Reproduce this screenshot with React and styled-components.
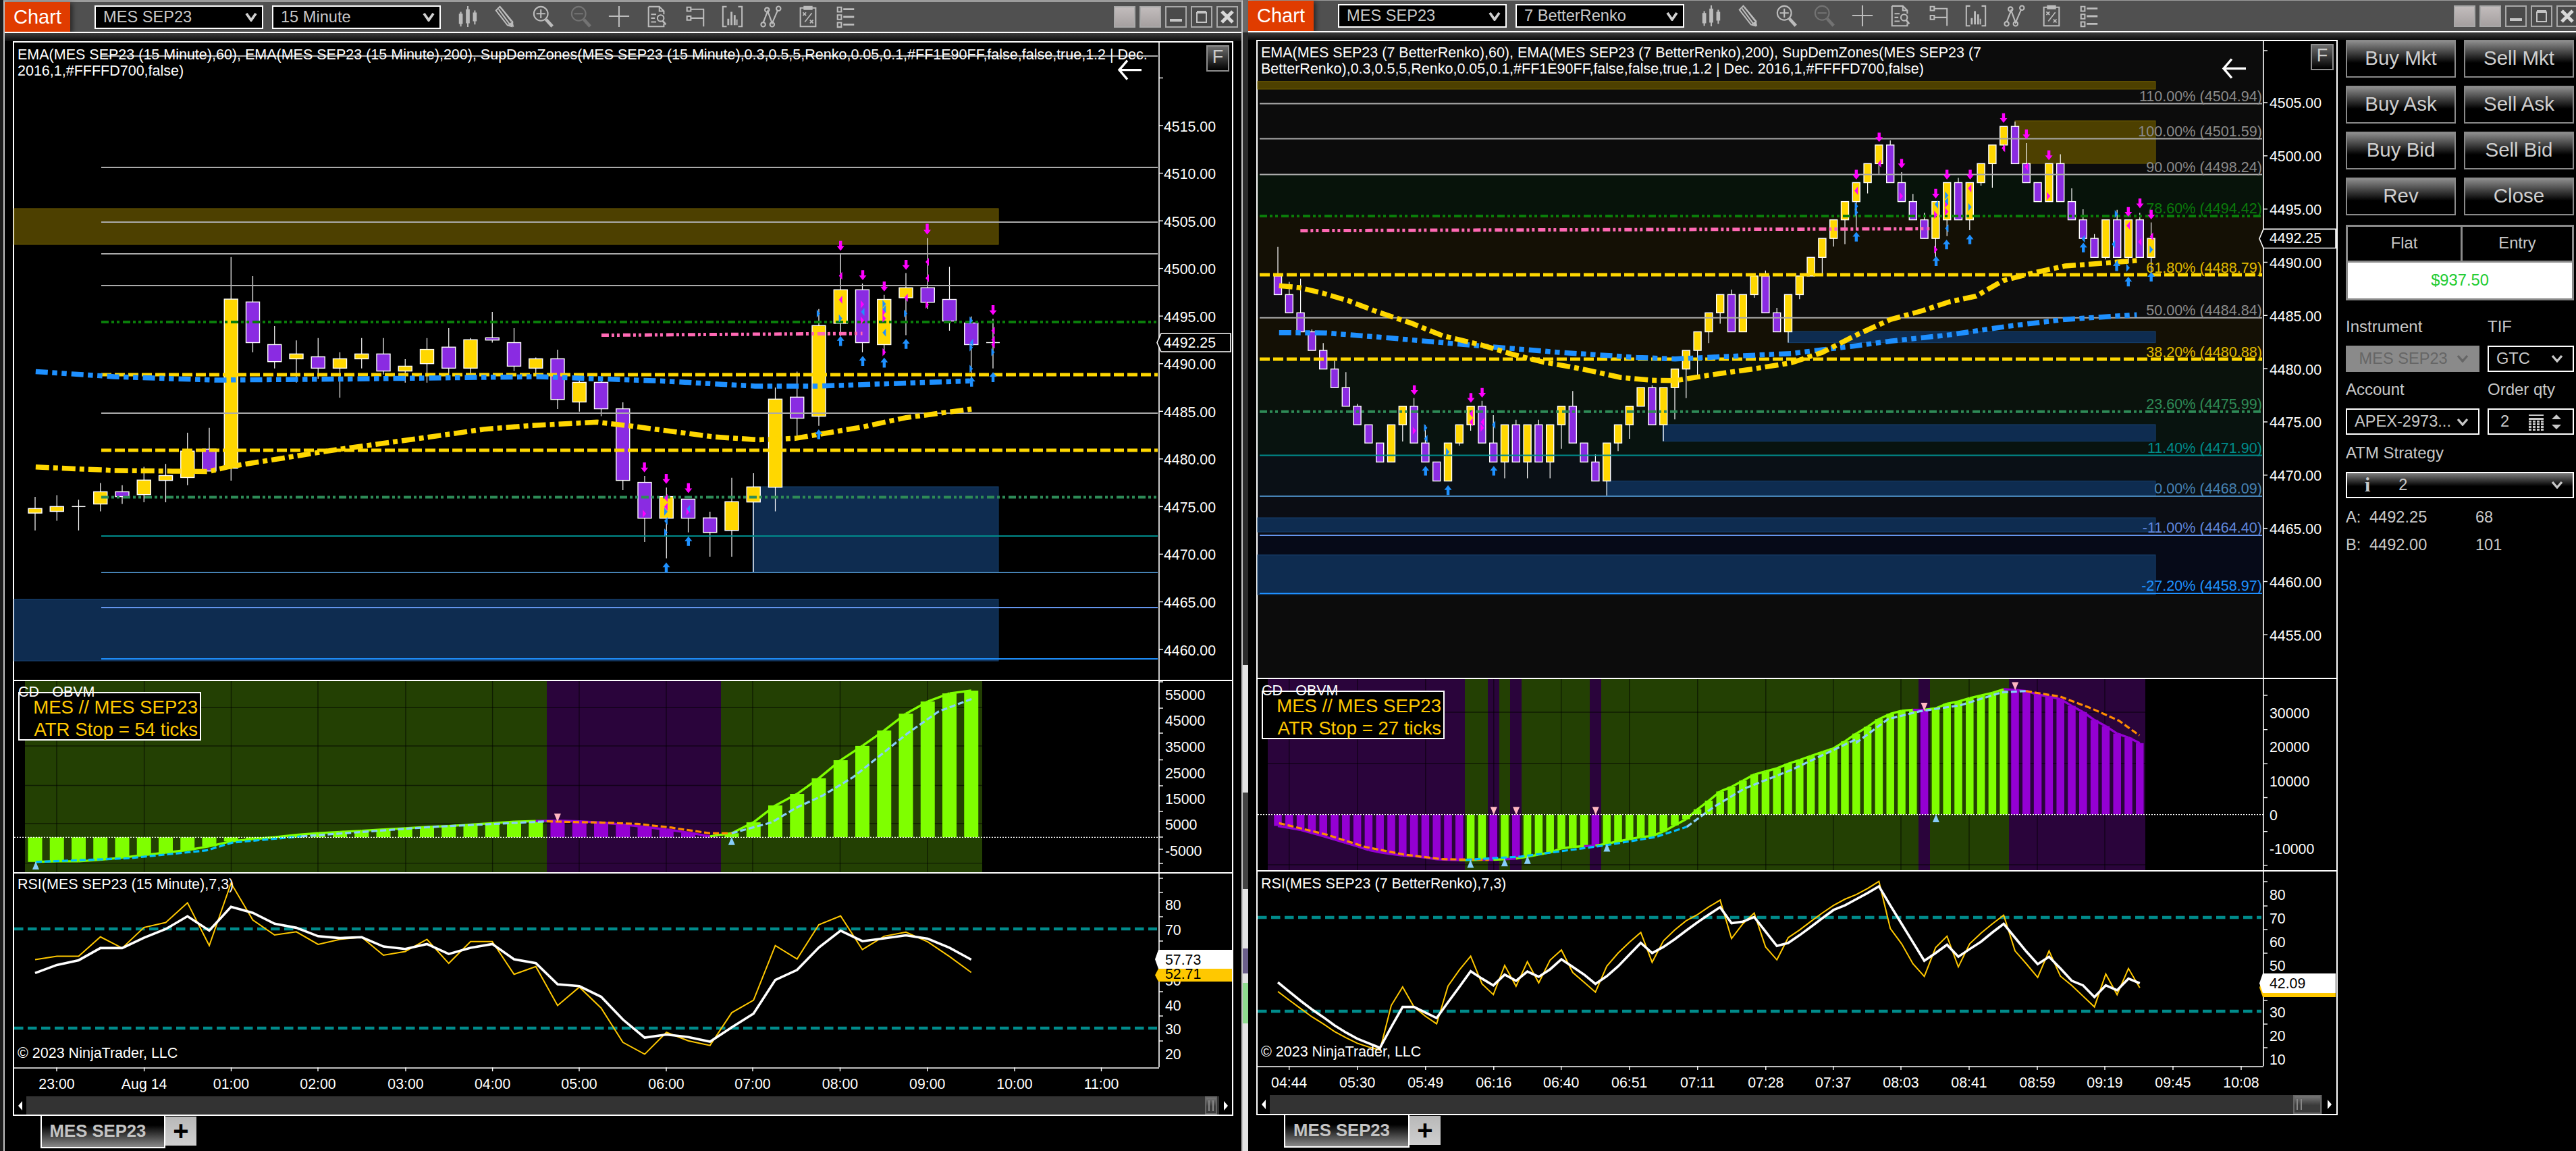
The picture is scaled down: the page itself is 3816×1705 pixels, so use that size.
import React from "react";
import styled, { createGlobalStyle } from "styled-components";

const GOLD = "#FFD700";
const VIOLET = "#8A2BE2";
const DODGER = "#1E90FF";
const MAGENTA = "#FF00FF";
const LIME = "#7FFF00";
const HIST_PURPLE = "#9400D3";

const EMA_BLUE_DASH = "18 6.5 7.5 6.5 7.5 7";
const EMA_GOLD_DASH = "20 6 7 6";
const FIB_DOTS = "11 4 4 4 4 5";

const pts = (list) => list.map((p) => p.join(",")).join(" ");
const range = (a, b, step = 1) => {
  const out = [];
  for (let v = a; v <= b; v += step) out.push(v);
  return out;
};

/* ---------- left chart data ---------- */
const lx = (i) => 52 + 32.25 * i;
const ly = (v) => 340 + v / 2.376;
const lx10 = (v) => 20 + v / 2.01;
const lx11 = (v) => 780 + v / 2.01;
const osc4x = (v) => v / 1.568;
const osc5x = (v) => 1000 + v / 1.742;
const osc4y = (v) => 980 + v / 2.163;

// wick top, body top, body bottom, wick bottom, kind
const LEFT_BARS = [
  [941, 982, 998, 1059, "g"], [935, 975, 992, 1025, "g"], [951, 975, 975, 1059, "d"],
  [892, 923, 966, 992, "g"], [900, 923, 940, 966, "p"], [835, 882, 933, 960, "g"],
  [825, 866, 883, 960, "g"], [715, 780, 873, 900, "g"], [698, 773, 850, 850, "p"],
  [97, 245, 840, 884, "g"], [164, 255, 398, 432, "p"], [340, 405, 465, 489, "p"],
  [390, 438, 455, 539, "g"], [382, 448, 488, 525, "p"], [432, 455, 488, 592, "g"],
  [382, 438, 455, 489, "g"], [382, 438, 498, 510, "p"], [456, 481, 498, 539, "g"],
  [382, 422, 472, 539, "g"], [347, 414, 488, 522, "p"], [382, 388, 488, 510, "g"],
  [290, 381, 389, 398, "p"], [347, 398, 481, 498, "p"], [450, 455, 488, 510, "g"],
  [423, 455, 598, 632, "p"], [523, 538, 607, 641, "g"], [532, 538, 631, 657, "p"],
  [608, 631, 883, 917, "p"], [867, 890, 1016, 1100, "p"], [908, 940, 1016, 1158, "g"],
  [949, 949, 1016, 1066, "p"], [993, 1015, 1066, 1152, "p"], [874, 958, 1059, 1152, "g"],
  [858, 906, 959, 1205, "g"], [556, 597, 907, 992, "g"], [500, 590, 664, 726, "p"],
  [280, 338, 657, 691, "g"], [88, 212, 330, 375, "g"], [190, 212, 398, 432, "p"],
  [230, 246, 405, 440, "g"], [153, 205, 240, 372, "g"], [30, 205, 256, 280, "p"],
  [131, 246, 322, 356, "p"], [306, 329, 405, 540, "p"], [314, 398, 398, 489, "d"],
];

const LEFT_OSC = [
  642, 640, 640, 635, 628, 620, 612, 604, 592, 576, 569, 563, 555, 550, 546, 542, 538, 534, 530, 527, 522, 518,
  513, 511, 510, 512, 516, 522, 530, 538, 548, 560, 550, 515, 461, 424, 374, 316, 270, 221, 167, 128, 102, 93,
];
const LEFT_RSI_W = [
  998, 972, 957, 918, 918, 885, 857, 816, 862, 786, 805, 840, 853, 880, 886, 883, 913, 921, 905, 937, 917, 905,
  954, 966, 1034, 1040, 1074, 1147, 1205, 1195, 1203, 1218, 1172, 1128, 1020, 988, 916, 862, 896, 887, 877, 888, 917, 955,
];
const LEFT_RSI_G = [
  955, 944, 944, 882, 918, 852, 836, 773, 910, 710, 828, 876, 866, 906, 890, 883, 941, 929, 890, 967, 897, 897,
  1002, 977, 1102, 1043, 1110, 1220, 1258, 1188, 1215, 1230, 1125, 1085, 910, 953, 843, 815, 923, 880, 867, 898, 945, 996,
];

const LEFT_MAIN = {
  zones: [
    { x1: 21, x2: 1479, y1: 309, y2: 362, kind: "gold" },
    { x1: 21, x2: 1479, y1: 887.5, y2: 979, kind: "blue" },
    { x1: 1115, x2: 1479, y1: 721, y2: 848, kind: "blue" },
  ],
  fibs: [
    { y: 83, c: "#AAAAAA" }, { y: 248, c: "#AAAAAA" }, { y: 329, c: "#AAAAAA" }, { y: 376, c: "#AAAAAA" },
    { y: 423, c: "#AAAAAA" }, { y: 477, c: "#0A7D0A", w: 4, dash: FIB_DOTS },
    { y: 555, c: GOLD, w: 5, dash: "15 5" }, { y: 612, c: "#AAAAAA" },
    { y: 667, c: GOLD, w: 5, dash: "15 5" }, { y: 736.5, c: "#2E8B57", w: 4, dash: FIB_DOTS },
    { y: 794, c: "#008B8B" }, { y: 848, c: "#4682B4" }, { y: 900, c: "#6495ED" }, { y: 976, c: DODGER },
  ],
  fibX: 150,
  emaBlue: [
    [lx10(66), ly(500)], [lx10(300), ly(518)], [lx10(600), ly(530)], [lx10(1000), ly(526)], [lx10(1560), ly(518)],
    [lx11(400), ly(533)], [lx11(680), ly(551)], [lx11(870), ly(551)], [lx11(1320), ly(533)],
  ],
  emaGold: [
    [lx10(66), ly(836)], [lx10(300), ly(848)], [lx10(580), ly(852)], [lx10(640), ly(835)], [lx10(960), ly(775)],
    [lx10(1240), ly(730)], [lx10(1400), ly(703)], [lx11(12), ly(690)], [lx11(210), ly(678)], [lx11(300), ly(690)],
    [lx11(560), ly(730)], [lx11(690), ly(740)], [lx11(800), ly(735)], [lx11(1000), ly(695)], [lx11(1130), ly(662)], [lx11(1325), ly(632)],
  ],
  pink: [[lx11(223), ly(372)], [lx11(1000), ly(366)]],
  downs: [[935, 40, 75], [1001, 143, 178], [1065, 183, 218], [1130, 107, 142], [1193, -20, 18], [1389, 266, 301], [351, 820, 855], [416, 860, 895], [482, 893, 928]],
  ups: [[935, 375, 410], [1001, 445, 480], [1065, 451, 486], [1130, 385, 420], [1325, 518, 553], [1389, 502, 537], [416, 1172, 1207], [482, 1080, 1114], [870, 703, 738]],
  marksM: [[940, 163, -1], [1198, 114, -1], [1198, 171, -1], [940, 247, -1], [995, 263, 1], [1060, 290, 1], [1060, 313, 1], [1135, 240, -1], [1188, 265, 1], [1060, 432, 1], [995, 320, 1], [1394, 356, -1], [1394, 388, -1], [1394, 405, -1], [346, 1000, 1], [420, 945, -1], [420, 976, -1], [476, 992, 1]],
  marksB: [[864, 296, 1], [930, 313, 1], [1006, 290, -1], [1060, 262, 1], [1070, 280, -1], [1070, 363, -1], [1124, 296, 1], [1319, 320, 1], [1330, 398, -1], [1319, 415, 1], [1319, 490, 1], [1384, 432, 1], [410, 993, 1], [420, 1026, -1], [410, 1066, 1], [487, 983, -1]],
};

/* ---------- right chart data ---------- */
const rx = (i) => 1893 + 16.8 * i;
const ry = (v) => 100 + v / 1.742;
const rx6 = (v) => 1850 + v / 1.742;
const rx7 = (v) => 2600 + v / 1.742;
const osc8y = (v) => 990 + v / 2.193;
const osc8x = (v) => 1850 + v / 1.742;
const osc9x = (v) => 2700 + v / 1.96;

const RIGHT_BARS = [
  [463, 538, 586, 586, "p"], [553, 586, 633, 633, "p"], [545, 633, 682, 682, "p"], [676, 682, 730, 730, "p"],
  [711, 730, 778, 778, "p"], [757, 778, 826, 826, "p"], [786, 826, 874, 874, "p"], [868, 874, 922, 922, "p"],
  [922, 922, 969, 969, "p"], [969, 969, 1018, 1018, "p"], [922, 922, 1018, 1018, "g"], [874, 874, 922, 965, "g"],
  [853, 874, 969, 969, "p"], [923, 969, 1018, 1018, "p"], [1018, 1018, 1067, 1067, "p"], [969, 969, 1067, 1067, "g"],
  [922, 922, 969, 976, "g"], [874, 874, 922, 937, "g"], [860, 874, 969, 969, "p"], [897, 969, 1018, 1018, "p"],
  [922, 922, 1018, 1060, "g"], [909, 922, 1018, 1018, "p"], [922, 922, 1018, 1060, "g"], [909, 922, 1018, 1018, "p"],
  [922, 922, 1018, 1060, "g"], [874, 874, 922, 984, "g"], [835, 874, 969, 969, "p"], [969, 969, 1018, 1018, "p"],
  [998, 1018, 1067, 1067, "p"], [969, 969, 1067, 1105, "g"], [922, 922, 969, 990, "g"], [874, 874, 922, 958, "g"],
  [826, 826, 874, 874, "g"], [820, 826, 922, 922, "p"], [826, 826, 922, 964, "g"], [778, 778, 826, 908, "g"],
  [730, 730, 778, 853, "g"], [682, 682, 730, 797, "g"], [633, 633, 682, 711, "g"], [586, 586, 633, 661, "g"],
  [573, 586, 682, 682, "p"], [586, 586, 682, 682, "g"], [538, 538, 586, 594, "g"], [524, 538, 633, 633, "p"],
  [620, 633, 682, 682, "p"], [586, 586, 682, 710, "g"], [538, 538, 586, 598, "g"], [490, 490, 538, 538, "g"],
  [441, 441, 490, 538, "g"], [393, 393, 441, 462, "g"], [346, 346, 393, 456, "g"], [297, 297, 346, 420, "g"],
  [248, 248, 297, 325, "g"], [200, 200, 248, 275, "g"], [188, 200, 297, 297, "p"], [270, 297, 346, 346, "p"],
  [326, 346, 393, 393, "p"], [375, 393, 441, 441, "p"], [346, 346, 441, 505, "g"], [297, 297, 393, 435, "g"],
  [285, 297, 393, 393, "p"], [297, 297, 393, 420, "g"], [248, 248, 297, 305, "g"], [200, 200, 248, 310, "g"],
  [152, 152, 200, 215, "g"], [140, 152, 248, 248, "p"], [195, 248, 297, 297, "p"], [297, 297, 346, 346, "p"],
  [248, 248, 346, 346, "g"], [224, 248, 346, 346, "p"], [312, 346, 393, 393, "p"], [366, 393, 441, 441, "p"],
  [430, 441, 490, 490, "p"], [393, 393, 490, 495, "g"], [367, 393, 490, 490, "p"], [393, 393, 490, 505, "g"],
  [375, 393, 490, 490, "p"], [400, 441, 490, 530, "g"],
];

const RIGHT_OSC = [
  512, 518, 525, 535, 545, 556, 567, 578, 590, 598, 603, 608, 610, 615, 620, 622, 623, 623, 622, 622, 620, 618,
  612, 605, 598, 585, 580, 578, 576, 570, 562, 555, 548, 545, 530, 510, 490, 458, 430, 400, 385, 365, 345, 335,
  325, 310, 298, 285, 272, 260, 237, 212, 190, 165, 148, 138, 135, 135, 130, 115, 108, 97, 88, 80, 68, 70, 74,
  85, 92, 100, 122, 142, 168, 188, 212, 225, 243,
];
const RIGHT_PURPLE = new Set([...range(0, 16), 19, 21, 28, 57, ...range(65, 76)]);

const RIGHT_RSI_W = [
  1020, 1050, 1080, 1108, 1133, 1160, 1183, 1203, 1218, 1233, 1165, 1100, 1100, 1118, 1136, 1085, 1035, 984, 1008,
  1030, 995, 1015, 985, 1002, 978, 945, 970, 995, 1025, 1000, 968, 930, 892, 925, 905, 880, 852, 825, 800, 776, 828,
  823, 808, 855, 902, 892, 867, 840, 812, 785, 770, 750, 730, 708, 770, 830, 890, 950, 925, 898, 937, 912, 888, 858,
  830, 875, 920, 961, 937, 975, 1015, 1030, 1068, 1030, 1046, 1008, 1023,
];
const RIGHT_RSI_G = [
  1050, 1078, 1105, 1132, 1155, 1180, 1200, 1218, 1230, 1240, 1095, 1035, 1100, 1130, 1155, 1032, 980, 935, 1025,
  1060, 965, 1033, 953, 1022, 948, 915, 988, 1020, 1052, 968, 925, 890, 858, 955, 885, 850, 820, 800, 775, 753, 878,
  830, 795, 905, 947, 875, 850, 822, 795, 770, 750, 735, 715, 692, 845, 895, 960, 1001, 907, 870, 970, 895, 860, 830,
  802, 918, 960, 1004, 918, 1000, 1030, 1065, 1100, 993, 1060, 975, 1038,
];

const RIGHT_MAIN = {
  bands: [
    [61, 258, "#0C0C0C"], [258, 320, "#07130A"], [320, 407, "#141005"], [407, 471, "#0D0D0D"], [471, 532, "#141005"],
    [532, 610, "#0A120C"], [610, 675, "#08130F"], [675, 735, "#0A1016"], [735, 793, "#0B0D14"], [793, 879, "#060A18"], [879, 1004, "#0C0C0C"],
  ],
  zones: [
    { x1: 1863, x2: 3193, y1: 120.7, y2: 132, kind: "gold" },
    { x1: 2985, x2: 3193, y1: 179, y2: 242, kind: "gold" },
    { x1: 2649, x2: 3193, y1: 491, y2: 507.6, kind: "blue" },
    { x1: 2463, x2: 3193, y1: 629, y2: 653.4, kind: "blue" },
    { x1: 2380, x2: 3193, y1: 712.5, y2: 735, kind: "blue" },
    { x1: 1863, x2: 3193, y1: 767, y2: 788, kind: "blue" },
    { x1: 1863, x2: 3193, y1: 822, y2: 880.7, kind: "blue" },
  ],
  fibs: [
    { y: 153.4, c: "#AAAAAA" }, { y: 205.6, c: "#AAAAAA" }, { y: 258.4, c: "#AAAAAA" },
    { y: 319.9, c: "#0A7D0A", w: 4, dash: FIB_DOTS }, { y: 407, c: GOLD, w: 5, dash: "15 5" },
    { y: 470.8, c: "#AAAAAA" }, { y: 532, c: GOLD, w: 5, dash: "15 5" },
    { y: 609.8, c: "#2E8B57", w: 4, dash: FIB_DOTS }, { y: 674.6, c: "#008B8B" },
    { y: 735, c: "#4682B4" }, { y: 793, c: "#6495ED" }, { y: 879, c: DODGER },
  ],
  fibX: 1866,
  fibLabels: [
    ["110.00% (4504.94)", 74, "#8A8A8A"], ["100.00% (4501.59)", 164, "#8A8A8A"], ["90.00% (4498.24)", 257, "#8A8A8A"],
    ["78.60% (4494.42)", 363, "#0B7A0B"], ["61.80% (4488.79)", 516, "#E0BB00"], ["50.00% (4484.84)", 627, "#8A8A8A"],
    ["38.20% (4480.88)", 734, "#E0BB00"], ["23.60% (4475.99)", 868, "#2E8B57"], ["11.40% (4471.90)", 982, "#008B8B"],
    ["0.00% (4468.09)", 1086, "#4682B4"], ["-11.00% (4464.40)", 1187, "#5F86DD"], ["-27.20% (4458.97)", 1337, DODGER],
  ],
  emaGold: [
    [78, 563], [130, 568], [190, 582], [260, 603], [330, 630], [420, 660], [500, 692], [600, 716], [680, 740], [760, 760],
    [860, 778], [960, 800], [1040, 807], [1100, 808], [1200, 792], [1300, 778], [1400, 762], [1480, 735],
  ].map(([x, y]) => [rx6(x), ry(y)]).concat(
    [[262, 690], [350, 650], [430, 628], [500, 605], [570, 590], [640, 550], [710, 532], [800, 512], [900, 505], [985, 498]].map(([x, y]) => [rx7(x), ry(y)])
  ),
  emaBlue: [
    [78, 684], [200, 685], [340, 696], [500, 710], [640, 722], [800, 735], [1000, 748], [1100, 752], [1250, 745], [1400, 738],
  ].map(([x, y]) => [rx6(x), ry(y)]).concat(
    [[260, 718], [350, 706], [500, 690], [650, 668], [800, 650], [985, 638]].map(([x, y]) => [rx7(x), ry(y)])
  ),
  pink: [[rx6(133), ry(421)], [rx7(450), ry(416)]],
  downs: [
    ...[[261, 264, 289], [320, 168, 192], [378, 236, 260], [466, 313, 338], [495, 264, 289], [555, 264, 289], [641, 118, 143], [700, 160, 185], [758, 214, 239], [963, 360, 385], [993, 338, 363], [1022, 367, 392]].map(([x, a, b]) => [rx7(x), a, b]),
    ...[[427, 820, 845], [573, 840, 865], [602, 827, 852]].map(([x, a, b]) => [rx6(x), a, b]),
  ],
  ups: [
    ...[[261, 424, 449], [467, 487, 512], [494, 444, 469], [554, 431, 456], [847, 452, 477], [963, 540, 565], [1022, 528, 552], [933, 500, 525]].map(([x, a, b]) => [rx7(x), a, b]),
    ...[[456, 1028, 1053], [632, 1028, 1053], [514, 1078, 1103]].map(([x, a, b]) => [rx6(x), a, b]),
  ],
  marksM: [
    ...[[265, 318, -1], [325, 248, -1], [373, 332, 1], [462, 380, 1], [490, 352, 1], [490, 372, 1], [462, 470, 1], [558, 312, -1], [645, 208, -1], [704, 256, -1], [753, 332, 1], [967, 408, -1], [997, 450, -1], [1027, 436, -1]].map(([x, y, d]) => [rx7(x), y, d]),
    ...[[423, 937, 1], [578, 893, -1], [578, 915, -1], [607, 915, -1], [598, 930, 1]].map(([x, y, d]) => [rx6(x), y, d]),
  ],
  marksB: [
    ...[[257, 358, 1], [257, 374, 1], [472, 353, -1], [490, 330, 1], [498, 345, -1], [499, 415, -1], [550, 360, 1], [851, 442, -1], [928, 378, 1], [929, 456, -1], [958, 517, 1], [1018, 470, 1], [936, 507, -1]].map(([x, y, d]) => [rx7(x), y, d]),
    ...[[452, 930, 1], [461, 958, -1], [509, 992, 1], [636, 922, -1]].map(([x, y, d]) => [rx6(x), y, d]),
  ],
};

/* ---------- per-window config ---------- */
const LEFT_CFG = {
  x0: 21, axisX: 1717, width: 1804,
  main: { y: 63, h: 944 }, osc: { y: 1009, h: 283 }, rsi: { y: 1294, h: 287 }, time: { y: 1581, h: 43 },
  scrollH: 27, thumb: 18, thumbGap: 3, rightBtn: 19,
  priceX: 1724, prices: range(0, 11).map((k) => [4515 - 5 * k, 187.5 + 70.55 * k]),
  priceTicks: range(-1, 11).map((k) => 186 + 70.55 * k),
  last: { y1: 494, y2: 521, x1: 1714, x2: 1823, textX: 1724 },
  arrow: { x1: 1656, x2: 1691, y: 103.6 },
  oscTicksX: 1726,
  oscLabels: [["55000", 1030.4], ["45000", 1068], ["35000", 1106.7], ["25000", 1145.5], ["15000", 1184], ["5000", 1221.8], ["-5000", 1260.6]],
  oscTicks: [1010, 1049, 1086, 1125.6, 1164, 1202, 1240, 1258, 1279],
  oscBg: [[37, 810, "g"], [810, 1068, "p"], [1068, 1455, "g"]],
  oscGridY: [1048, 1105, 1163.5, 1220, 1278.6],
  oscGridX: [84, 213.6, 342.5, 471, 601, 729.6, 858, 987, 1115, 1244.5, 1373.7],
  zeroY: osc4y(563),
  rsiDash: [1376, 1523],
  rsiLabels: [[80, 1340.6], [70, 1377.6], [50, 1452.6], [40, 1489.6], [30, 1524.6], [20, 1561.6]],
  rsiTicks: [1301, 1322, 1358, 1394, 1431, 1469, 1505, 1542],
  times: [["23:00", 84], ["Aug 14", 213.6], ["01:00", 342.5], ["02:00", 471], ["03:00", 601], ["04:00", 729.6], ["05:00", 858], ["06:00", 987], ["07:00", 1115], ["08:00", 1244.5], ["09:00", 1373.7], ["10:00", 1503], ["11:00", 1631.5]],
  interval: "15 Minute",
  atr: "54",
};

const RIGHT_CFG = {
  x0: 1863, axisX: 3353, width: 1598,
  main: { y: 61, h: 943 }, osc: { y: 1006, h: 283 }, rsi: { y: 1291, h: 288 }, time: { y: 1579, h: 43 },
  scrollH: 28, thumb: 42, thumbGap: 1, rightBtn: 21,
  priceX: 3362, prices: range(0, 10).map((k) => [4505 - 5 * k, 153.4 + 78.83 * k]),
  priceTicks: [75, ...range(0, 10).map((k) => 152 + 78.83 * k)],
  last: { y1: 339.4, y2: 367.5, x1: 3347, x2: 3460, textX: 3362 },
  arrow: { x1: 3292, x2: 3327, y: 101.5 },
  oscTicksX: 3362,
  oscLabels: [["30000", 1056.6], ["20000", 1106.7], ["10000", 1157.8], ["0", 1207.5], ["-10000", 1257.7]],
  oscTicks: [1030, 1080.7, 1131.4, 1181.5, 1231.7, 1281.8],
  oscBg: [[1878, 2170, "p"], [2170, 2204, "g"], [2204, 2221, "p"], [2221, 2237, "g"], [2237, 2254, "p"], [2254, 2355, "g"], [2355, 2372, "p"], [2372, 2842, "g"], [2842, 2859, "p"], [2859, 2976, "g"], [2976, 3178, "p"]],
  oscGridY: [1055, 1131, 1206.6, 1281],
  oscGridX: [1909.7, 2010.7, 2111.8, 2212.8, 2312.7, 2413.7, 2514.8, 2615.8, 2715.7, 2816, 2917, 3018, 3118],
  zeroY: osc8y(475),
  rsiDash: [1359, 1498],
  rsiLabels: [[80, 1326], [70, 1360.7], [60, 1395.8], [50, 1431], [30, 1499.8], [20, 1535], [10, 1570]],
  rsiTicks: [1306, 1342, 1377, 1412, 1447, 1482, 1517, 1552],
  times: [["04:44", 1909.7], ["05:30", 2010.7], ["05:49", 2111.8], ["06:16", 2212.8], ["06:40", 2312.7], ["06:51", 2413.7], ["07:11", 2514.8], ["07:28", 2615.8], ["07:37", 2715.7], ["08:03", 2816], ["08:41", 2917], ["08:59", 3018], ["09:19", 3118], ["09:45", 3219], ["10:08", 3320]],
  interval: "7 BetterRenko",
  atr: "27",
};

/* ---------- styles ---------- */
const GlobalStyle = createGlobalStyle`
  html, body { margin: 0; background: #000; }
  body { font-family: "Liberation Sans", Arial, sans-serif; color: #fff; }
  * { box-sizing: border-box; }
`;

const Page = styled.div`
  display: flex;
  width: 3816px;
  height: 1705px;
  padding-left: 5px;
  background: #1c1c1c;
  overflow: hidden;
`;

const Window = styled.div`
  display: flex;
  flex-direction: column;
  background: #000;
  width: ${(p) => p.$width}px;
  border-top: ${(p) => p.$topEdge}px solid #9c9c9c;
  border-left: ${(p) => (p.$edged ? "2px solid #c4c4c4" : "none")};
  border-right: ${(p) => (p.$edged ? "2px solid #c4c4c4" : "none")};
`;

const Gutter = styled.div`
  width: 8px;
  height: 100%;
  background: linear-gradient(
    180deg,
    #6a6a6a 0 48px,
    #2b2b2b 48px 985px,
    #e4e4e4 985px 1174px,
    #444 1174px 1317px,
    #e4e4e4 1317px 1405px,
    #6b5f8a 1405px 1442px,
    #e4e4e4 1442px 1456px,
    #8fdc8f 1456px 1516px,
    #e4e4e4 1516px
  );
`;

const TitleBar = styled.div`
  display: flex;
  align-items: center;
  flex: none;
  height: ${(p) => p.$h}px;
  background: #505050;
`;

const ChartTag = styled.div`
  width: 97px;
  height: 100%;
  background: #e03c00;
  color: #fff;
  font-size: 29px;
  line-height: 44px;
  text-align: center;
  box-shadow: 4px 2px 6px rgba(0, 0, 0, 0.45);
  margin-right: 36px;
`;

const Combo = styled.div`
  display: flex;
  align-items: center;
  justify-content: space-between;
  width: 250px;
  height: 35px;
  margin-right: ${(p) => p.$mr || 0}px;
  padding: 0 7px 0 11px;
  background: #000;
  border: 2px solid #fff;
  color: #c8c8c8;
  font-size: 23.6px;
`;

const ToolRow = styled.div`
  display: flex;
  gap: 16px;
  margin-left: 20px;
`;

const ToolSvg = styled.svg`
  display: block;
  width: 40px;
  height: 34px;
  fill: none;
  stroke: #bcbcbc;
  stroke-width: 2.2;
  opacity: ${(p) => (p.$dim ? 0.32 : 1)};
`;

const WindowButtons = styled.div`
  display: flex;
  gap: 6px;
  margin-left: auto;
  margin-right: ${(p) => p.$mr}px;
`;

const WinButton = styled.div`
  display: flex;
  align-items: center;
  justify-content: center;
  width: 32px;
  height: 32px;
  border: 2px solid #a8a8a8;
  background: ${(p) => (p.$solid ? "linear-gradient(180deg, #c2bcbc, #a5a0a0)" : "#4a4a4a")};
`;

const SubBar = styled.div`
  flex: none;
  height: ${(p) => p.$h}px;
  border-top: 2px solid #fff;
  background: linear-gradient(180deg, #3d3d3d, #0c0c0c);
`;

const Body = styled.div`
  display: flex;
  align-items: flex-start;
  padding-left: 12px;
`;

const Frame = styled.div`
  display: flex;
  flex-direction: column;
  flex: none;
  width: ${(p) => p.$width + 4}px;
  border: 2px solid #fff;
`;

const Pane = styled.div`
  position: relative;
  height: ${(p) => p.$h}px;
  border-top: ${(p) => (p.$ruled ? "2px solid #fff" : "none")};
  box-sizing: content-box;
`;

const PaneSvg = styled.svg`
  display: block;
  overflow: visible;
`;

const AxisText = styled.text`
  font-family: "Liberation Sans", Arial, sans-serif;
  font-size: ${(p) => p.$size || 21.3}px;
  fill: ${(p) => p.$fill || "#fff"};
  dominant-baseline: central;
`;

const ChartTitle = styled.div`
  position: absolute;
  left: ${(p) => p.$left}px;
  top: ${(p) => p.$top}px;
  white-space: nowrap;
  font-size: 21.5px;
  line-height: 23.5px;
  color: #fff;
`;

const FloatButton = styled.div`
  position: absolute;
  right: 4px;
  top: ${(p) => p.$top}px;
  width: 34px;
  height: 39px;
  border: 2px solid #8e8e8e;
  background: linear-gradient(180deg, #6c6c6c, #000);
  color: #ccc;
  font-size: 27px;
  line-height: 31px;
  text-align: center;
`;

const InfoBox = styled.div`
  position: absolute;
  left: 6px;
  top: ${(p) => p.$top}px;
  width: 271px;
  height: 72px;
  padding: 4px 3px 0 0;
  border: 2px solid #fff;
  background: #000;
  color: #ffc800;
  font-size: 27.6px;
  line-height: 33px;
  text-align: right;
  white-space: nowrap;
`;

const ScrollBar = styled.div`
  display: flex;
  align-items: center;
  justify-content: flex-end;
  height: ${(p) => p.$h}px;
  background: #333;
`;

const ScrollArrow = styled.div`
  display: flex;
  align-items: center;
  justify-content: center;
  flex: none;
  width: ${(p) => p.$w}px;
  height: 100%;
  background: #000;
  margin-right: ${(p) => (p.$start ? "auto" : 0)};
  &::after {
    content: "";
    border-top: 7px solid transparent;
    border-bottom: 7px solid transparent;
    border-left: ${(p) => (p.$start ? 0 : "6px solid #fff")};
    border-right: ${(p) => (p.$start ? "6px solid #fff" : 0)};
  }
`;

const ScrollThumb = styled.div`
  flex: none;
  width: ${(p) => p.$w}px;
  height: 100%;
  margin-right: ${(p) => p.$gap}px;
  border: 2px solid #666;
  background: linear-gradient(180deg, #777, #3a3a3a 55%);
  display: flex;
  align-items: center;
  justify-content: flex-start;
  gap: 4px;
  padding-left: 3px;
  &::before, &::after {
    content: "";
    width: 2px;
    height: 16px;
    background: #888;
  }
`;

const TabRow = styled.div`
  display: flex;
  align-items: flex-start;
  margin-left: ${(p) => p.$ml}px;
`;

const Tab = styled.div`
  width: ${(p) => p.$w}px;
  height: 48px;
  padding-right: 15px;
  border: 2px solid #fff;
  border-top: none;
  background: linear-gradient(180deg, #000 30%, #8a8a8a);
  color: #c4c4c4;
  font-size: 25.7px;
  font-weight: 700;
  line-height: 44px;
  text-align: center;
`;

const AddTab = styled.div`
  width: 46px;
  height: 43px;
  margin-top: 1px;
  background: linear-gradient(180deg, #b8b8b8, #cfcfcf);
  color: #000;
  font-size: 40px;
  font-weight: 700;
  line-height: 42px;
  text-align: center;
`;

const OrderPanel = styled.div`
  display: flex;
  flex-direction: column;
  flex: none;
  width: 338px;
  margin-left: 12px;
  color: #c8c8c8;
`;

const ActionGrid = styled.div`
  display: grid;
  grid-template-columns: 163px 163px;
  grid-auto-rows: 55.5px;
  gap: 12.5px 12px;
`;

const ActionButton = styled.div`
  border: 2px solid #8a8a8a;
  background: linear-gradient(180deg, #8c8c8c, #000 62%);
  color: #cfcfcf;
  font-size: 29.5px;
  line-height: 50px;
  text-align: center;
`;

const PositionBox = styled.div`
  display: grid;
  grid-template-columns: 167px 1fr;
  grid-template-rows: 53px 53px;
  margin-top: 14px;
  border: 3px solid #8a8a8a;
  font-size: 23.7px;
`;

const PositionCell = styled.div`
  display: flex;
  align-items: center;
  justify-content: center;
  border-left: ${(p) => (p.$split ? "3px solid #8a8a8a" : "none")};
  border-bottom: 3px solid #8a8a8a;
`;

const PnlCell = styled.div`
  grid-column: 1 / 3;
  display: flex;
  align-items: center;
  justify-content: center;
  background: #fff;
  color: #22cc33;
`;

const FieldGrid = styled.div`
  display: grid;
  grid-template-columns: 198px 128px;
  gap: 12.5px 12px;
  margin-top: 25px;
`;

const Field = styled.div`
  display: flex;
  flex-direction: column;
  gap: 14px;
  grid-column: ${(p) => (p.$wide ? "1 / 3" : "auto")};
`;

const FieldLabel = styled.div`
  font-size: 24px;
  line-height: 28px;
  white-space: nowrap;
`;

const FieldBox = styled.div`
  display: flex;
  align-items: center;
  height: 39px;
  padding: 0 8px 0 11px;
  border: 2px solid ${(p) => (p.$disabled ? "#8a8a8a" : "#fff")};
  background: ${(p) => (p.$disabled ? "#8a8a8a" : p.$shaded ? "linear-gradient(180deg, #7c7c7c, #000 55%)" : "#000")};
  color: ${(p) => (p.$disabled ? "#666" : "#c8c8c8")};
  font-size: 23.6px;
  white-space: nowrap;
`;

const BoxChevron = styled.svg`
  display: block;
  flex: none;
  margin-left: auto;
  margin-right: 6px;
  width: 18px;
  height: 12px;
  fill: none;
  stroke: currentColor;
  stroke-width: 3.4;
`;

const InfoGlyph = styled.span`
  font-family: "Liberation Serif", serif;
  font-size: 30px;
  font-weight: 700;
  margin: 0 42px 0 15px;
`;

const QtyValue = styled.span`
  margin-left: 6px;
`;

const QtyIcons = styled.svg`
  display: block;
  flex: none;
  margin-left: auto;
  width: 60px;
  height: 28px;
  fill: #c8c8c8;
`;

const QuoteGrid = styled.div`
  display: grid;
  grid-template-columns: 35px 157px 1fr;
  grid-auto-rows: 28px;
  row-gap: 13px;
  margin-top: 14.5px;
  font-size: 23.6px;
  line-height: 28px;
`;

const ComboChevron = styled.svg`
  display: block;
  width: 18px;
  height: 14px;
  fill: none;
  stroke: #d0d0d0;
  stroke-width: 3.8;
`;

/* ---------- toolbar drawings ---------- */
const TOOLS = {
  bars: (
    <>
      <path d="M9 10v23M20 1v33M31 8v22" />
      <path fill="#bcbcbc" d="M6 13h6v16H6zM17 6h6v22h-6zM28 11h6v14h-6z" stroke="none" />
    </>
  ),
  pencil: (
    <>
      <path d="M5 8l6-6 20 24-1 7-7-2z" />
      <path d="M9 6l17 23M13 4l16 21" />
      <path fill="#bcbcbc" stroke="none" d="M24 30l7-5 2 9z" />
    </>
  ),
  zoomIn: (
    <>
      <circle cx="16" cy="13" r="11" />
      <path d="M16 6v14M9 13h14" />
      <path d="M24 22l10 11" strokeWidth="5" />
    </>
  ),
  zoomOut: (
    <>
      <circle cx="16" cy="13" r="11" />
      <path d="M9 13h14" />
      <path d="M24 22l10 11" strokeWidth="5" />
    </>
  ),
  cross: <path d="M20 1v33M4 17h32" />,
  report: (
    <>
      <path d="M7 2h17l7 7v5M7 2v31h24v-4M24 2v7h7" />
      <path d="M11 14h8M11 20h6M11 26h8" />
      <circle cx="26" cy="20" r="5" />
      <path d="M29 24l5 6" strokeWidth="3" />
    </>
  ),
  template: (
    <>
      <path d="M8 3h6v6H8zM8 17h6v6H8zM14 6h21M14 20h21M34 6v27" />
    </>
  ),
  indicator: (
    <>
      <path d="M11 2H5v31h6M29 2h6v31h-6" />
      <path fill="#bcbcbc" stroke="none" d="M12 21h3v10h-3zM17 10h3v21h-3zM22 15h3v16h-3zM26 22h2v9h-2z" />
    </>
  ),
  nodes: (
    <>
      <path d="M9 27L16 9l7 19L32 7" />
      <circle cx="9" cy="30" r="3.4" />
      <circle cx="15" cy="7" r="3.4" />
      <circle cx="23" cy="30" r="3.4" />
      <circle cx="33" cy="5" r="3.4" />
    </>
  ),
  strategy: (
    <>
      <path d="M8 4h24v29H8zM14 2h12v4H14z" />
      <path d="M12 11l5 5M17 11l-5 5M23 23l5 5M28 23l-5 5M15 26L26 12" strokeWidth="1.8" />
    </>
  ),
  list: (
    <>
      <path d="M7 3h6v7H7zM7 15h6v7H7zM7 27h6v7H7z" />
      <path d="M16 6h17M16 18h17M16 30h17" strokeWidth="3" />
    </>
  ),
};

const Chevron = () => (
  <BoxChevron viewBox="0 0 18 12">
    <path d="M2 2l7 8 7-8" />
  </BoxChevron>
);

function InstrumentCombo({ children, mr }) {
  return (
    <Combo $mr={mr}>
      {children}
      <ComboChevron viewBox="0 0 18 14">
        <path d="M2 2l7 10 7-10" />
      </ComboChevron>
    </Combo>
  );
}

function TopBar({ cfg, h, buttonsMr }) {
  return (
    <TitleBar $h={h}>
      <ChartTag>Chart</ChartTag>
      <InstrumentCombo mr={13}>MES SEP23</InstrumentCombo>
      <InstrumentCombo>{cfg.interval}</InstrumentCombo>
      <ToolRow>
        {Object.keys(TOOLS).map((name) => (
          <ToolSvg key={name} viewBox="0 0 40 36" $dim={name === "zoomOut"}>
            {TOOLS[name]}
          </ToolSvg>
        ))}
      </ToolRow>
      <WindowButtons $mr={buttonsMr}>
        <WinButton $solid />
        <WinButton $solid />
        <WinButton>
          <svg width="20" height="20" viewBox="0 0 20 20">
            <rect x="1" y="13" width="18" height="4" fill="#c4c4c4" />
          </svg>
        </WinButton>
        <WinButton>
          <svg width="20" height="22" viewBox="0 0 20 22" fill="none" stroke="#c4c4c4">
            <path d="M3 5h14v14H3z" strokeWidth="2" />
            <path d="M3 4h14" strokeWidth="4" />
          </svg>
        </WinButton>
        <WinButton>
          <svg width="22" height="22" viewBox="0 0 22 22" stroke="#d8d8d8" strokeWidth="5">
            <path d="M3 3l16 16M19 3L3 19" />
          </svg>
        </WinButton>
      </WindowButtons>
    </TitleBar>
  );
}

/* ---------- chart drawing ---------- */
function PaneDrawing({ cfg, box, children }) {
  return (
    <PaneSvg width={cfg.width} height={box.h} viewBox={`${cfg.x0} ${box.y} ${cfg.width} ${box.h}`}>
      {children}
    </PaneSvg>
  );
}

function Candles({ bars, getX, getY, width }) {
  return bars.map(([wt, top, bottom, wb, kind], i) => {
    const x = getX(i);
    return (
      <g key={i}>
        <line x1={x} x2={x} y1={getY(wt)} y2={getY(wb)} stroke="#fff" strokeWidth="1.2" />
        {kind === "d" ? (
          <line x1={x - width / 2} x2={x + width / 2} y1={getY(top)} y2={getY(top)} stroke="#fff" strokeWidth="1.4" />
        ) : (
          <rect
            x={x - width / 2}
            y={getY(top)}
            width={width}
            height={getY(bottom) - getY(top)}
            fill={kind === "g" ? GOLD : VIOLET}
            stroke="#fff"
            strokeWidth="1.4"
          />
        )}
      </g>
    );
  });
}

function ArrowMark({ x, y1, y2, up, color }) {
  const head = up ? y1 : y2;
  const neck = up ? y1 + 7 : y2 - 7;
  const tail = up ? y2 : y1;
  return (
    <polygon
      fill={color}
      points={pts([[x, head], [x + 5.5, neck], [x + 2.2, neck], [x + 2.2, tail], [x - 2.2, tail], [x - 2.2, neck], [x - 5.5, neck]])}
    />
  );
}

function Mark({ x, y, dir, color }) {
  return <polygon fill={color} points={pts([[x, y - 6], [x, y + 6], [x + dir * 5, y]])} />;
}

function PriceAxis({ cfg }) {
  const { axisX, last, main } = cfg;
  return (
    <>
      <rect x={axisX} y={main.y} width={cfg.x0 + cfg.width - axisX} height={main.h} fill="#000" />
      <line x1={axisX} x2={axisX} y1={main.y} y2={main.y + main.h} stroke="#fff" strokeWidth="1.6" />
      {cfg.priceTicks.map((y) => (
        <line key={y} x1={axisX} x2={axisX + 6} y1={y} y2={y} stroke="#fff" strokeWidth="1.4" />
      ))}
      {cfg.prices.map(([price, y]) => (
        <AxisText key={price} x={cfg.priceX} y={y}>
          {price.toFixed(2)}
        </AxisText>
      ))}
      <polygon
        fill="#000"
        stroke="#fff"
        strokeWidth="1.6"
        points={pts([
          [last.x1, (last.y1 + last.y2) / 2],
          [last.x1 + 6, last.y1],
          [last.x2, last.y1],
          [last.x2, last.y2],
          [last.x1 + 6, last.y2],
        ])}
      />
      <AxisText x={last.textX} y={(last.y1 + last.y2) / 2}>
        4492.25
      </AxisText>
    </>
  );
}

function PriceChart({ cfg, data, bars, getX, getY, markX, width }) {
  const { x1, x2, y } = cfg.arrow;
  return (
    <PaneDrawing cfg={cfg} box={cfg.main}>
      {data.bands &&
        data.bands.map(([a, b, c]) => <rect key={a} x={cfg.x0} y={a} width={cfg.axisX - cfg.x0} height={b - a} fill={c} />)}
      {data.zones.map((z, i) => (
        <rect
          key={i}
          x={z.x1}
          y={z.y1}
          width={z.x2 - z.x1}
          height={z.y2 - z.y1}
          fill={z.kind === "gold" ? "#4d4000" : "#0e2c50"}
          stroke={z.kind === "gold" ? "#6f5c00" : "#16406e"}
          strokeWidth="1"
        />
      ))}
      <Candles bars={bars} getX={getX} getY={getY} width={width} />
      {data.fibs.map((f) => (
        <line
          key={f.y}
          x1={data.fibX}
          x2={cfg.axisX - 2}
          y1={f.y}
          y2={f.y}
          stroke={f.c}
          strokeWidth={f.w || 2}
          strokeDasharray={f.dash}
        />
      ))}
      {data.fibLabels &&
        data.fibLabels.map(([label, yy, color]) => (
          <AxisText key={label} x={cfg.axisX - 2} y={ry(yy)} textAnchor="end" $fill={color} $size={21.6}>
            {label}
          </AxisText>
        ))}
      <polyline points={pts(data.pink)} fill="none" stroke="#FF69B4" strokeWidth="5" strokeDasharray={FIB_DOTS} />
      <polyline points={pts(data.emaBlue)} fill="none" stroke={DODGER} strokeWidth="7.5" strokeDasharray={EMA_BLUE_DASH} />
      <polyline points={pts(data.emaGold)} fill="none" stroke={GOLD} strokeWidth="7.5" strokeDasharray={EMA_GOLD_DASH} />
      {data.downs.map(([x, a, b], i) => (
        <ArrowMark key={i} x={markX(x)} y1={getY(a)} y2={getY(b)} color={MAGENTA} />
      ))}
      {data.ups.map(([x, a, b], i) => (
        <ArrowMark key={i} x={markX(x)} y1={getY(a)} y2={getY(b)} color={DODGER} up />
      ))}
      {data.marksM.map(([x, yy, d], i) => (
        <Mark key={i} x={markX(x)} y={getY(yy)} dir={d} color={MAGENTA} />
      ))}
      {data.marksB.map(([x, yy, d], i) => (
        <Mark key={i} x={markX(x)} y={getY(yy)} dir={d} color={DODGER} />
      ))}
      <PriceAxis cfg={cfg} />
      <path
        d={`M${x2} ${y}H${x1 + 3}M${x1 + 14} ${y - 14}L${x1 + 2} ${y}l12 14`}
        fill="none"
        stroke="#fff"
        strokeWidth="3.4"
      />
    </PaneDrawing>
  );
}

function OscChart({ cfg, lines, values, getX, isPurple, getY, barWidth, ups, downs }) {
  const { osc, axisX, x0 } = cfg;
  const zero = cfg.zeroY;
  const lastBgEnd = cfg.oscBg[cfg.oscBg.length - 1][1];
  return (
    <PaneDrawing cfg={cfg} box={osc}>
      {cfg.oscBg.map(([a, b, kind]) => (
        <rect key={a} x={a} y={osc.y} width={b - a} height={osc.h} fill={kind === "g" ? "#234003" : "#2A043B"} />
      ))}
      {cfg.oscGridX.map((x) => (
        <line key={x} x1={x} x2={x} y1={osc.y} y2={osc.y + osc.h} stroke="#000" strokeOpacity="0.55" strokeWidth="1.4" />
      ))}
      {cfg.oscGridY.map((y) => (
        <line key={y} x1={x0} x2={axisX} y1={y} y2={y} stroke="#000" strokeOpacity="0.55" strokeWidth="1.4" />
      ))}
      <rect x={lastBgEnd} y={osc.y} width={axisX - lastBgEnd} height={osc.h} fill="#000" />
      {values.map((v, i) => {
        const y = getY(v);
        return (
          <rect
            key={i}
            x={getX(i) - barWidth / 2}
            y={Math.min(y, zero)}
            width={barWidth}
            height={Math.abs(y - zero)}
            fill={isPurple(i) ? HIST_PURPLE : LIME}
          />
        );
      })}
      {values.slice(1).map((v, i) => (
        <line
          key={i}
          x1={getX(i)}
          y1={getY(values[i])}
          x2={getX(i + 1)}
          y2={getY(v)}
          stroke={isPurple(i + 1) ? HIST_PURPLE : LIME}
          strokeWidth="3.4"
        />
      ))}
      {lines.map((line, i) => (
        <polyline key={i} points={pts(line.points)} fill="none" stroke={line.color} strokeWidth="3.2" strokeDasharray="9 4" />
      ))}
      <line x1={x0} x2={axisX} y1={zero} y2={zero} stroke="#fff" strokeWidth="1.2" strokeDasharray="2 2" />
      {ups.map(([x, y], i) => (
        <polygon key={i} fill="#87CEFA" points={pts([[x, y - 6], [x + 5, y + 6], [x - 5, y + 6]])} />
      ))}
      {downs.map(([x, y], i) => (
        <polygon key={i} fill="#FFB6C1" points={pts([[x, y + 6], [x + 5, y - 6], [x - 5, y - 6]])} />
      ))}
      <line x1={axisX} x2={axisX} y1={osc.y} y2={osc.y + osc.h} stroke="#fff" strokeWidth="1.6" />
      {cfg.oscTicks.map((y) => (
        <line key={y} x1={axisX} x2={axisX + 6} y1={y} y2={y} stroke="#fff" strokeWidth="1.4" />
      ))}
      {cfg.oscLabels.map(([label, y]) => (
        <AxisText key={label} x={cfg.oscTicksX} y={y}>
          {label}
        </AxisText>
      ))}
    </PaneDrawing>
  );
}

function RsiChart({ cfg, white, gold, getX, getY, labels }) {
  const { rsi, axisX, x0 } = cfg;
  const line = (vals) => pts(vals.map((v, i) => [getX(i), getY(v)]));
  return (
    <PaneDrawing cfg={cfg} box={rsi}>
      {cfg.rsiDash.map((y) => (
        <line key={y} x1={x0} x2={axisX - 3} y1={y} y2={y} stroke="#008B8B" strokeWidth="4.5" strokeDasharray="13.5 6.5" />
      ))}
      <polyline points={line(gold)} fill="none" stroke="#FFC800" strokeWidth="2" />
      <polyline points={line(white)} fill="none" stroke="#fff" strokeWidth="3.6" />
      <line x1={axisX} x2={axisX} y1={rsi.y} y2={rsi.y + rsi.h} stroke="#fff" strokeWidth="1.6" />
      {cfg.rsiTicks.map((y) => (
        <line key={y} x1={axisX} x2={axisX + 6} y1={y} y2={y} stroke="#fff" strokeWidth="1.4" />
      ))}
      {cfg.rsiLabels.map(([label, y]) => (
        <AxisText key={label} x={cfg.oscTicksX} y={y}>
          {label}
        </AxisText>
      ))}
      {labels}
    </PaneDrawing>
  );
}

function TimeAxis({ cfg }) {
  const { time, axisX, x0 } = cfg;
  return (
    <PaneDrawing cfg={cfg} box={time}>
      <line x1={x0} x2={axisX} y1={time.y + 1} y2={time.y + 1} stroke="#fff" strokeWidth="1.6" />
      {cfg.times.map(([label, x]) => (
        <g key={label}>
          <line x1={x} x2={x} y1={time.y} y2={time.y + 6} stroke="#fff" strokeWidth="1.4" />
          <AxisText x={x} y={time.y + 25} textAnchor="middle">
            {label}
          </AxisText>
        </g>
      ))}
    </PaneDrawing>
  );
}

const RsiFlag = ({ x1, x2, y1, y2, fill }) => (
  <polygon fill={fill} points={pts([[x1, (y1 + y2) / 2], [x1 + 5, y1], [x2, y1], [x2, y2], [x1 + 5, y2]])} />
);

/* ---------- a whole chart frame ---------- */
function ChartFrame({ cfg, titleLines, titlePos, fTop, main, osc, rsi, oscTitle, rsiTitle, copyright, infoTop }) {
  return (
    <Frame $width={cfg.width}>
      <Pane $h={cfg.main.h}>
        {main}
        <ChartTitle $left={titlePos[0]} $top={titlePos[1]}>
          {titleLines[0]}
          <br />
          {titleLines[1]}
        </ChartTitle>
        <FloatButton $top={fTop}>F</FloatButton>
      </Pane>
      <Pane $h={cfg.osc.h} $ruled>
        {osc}
        <InfoBox $top={infoTop}>
          MES // MES SEP23
          <br />
          ATR Stop = {cfg.atr} ticks
        </InfoBox>
        <ChartTitle $left={6} $top={oscTitle}>
          CD - OBVM
        </ChartTitle>
      </Pane>
      <Pane $h={cfg.rsi.h} $ruled>
        {rsi}
        <ChartTitle $left={5} $top={rsiTitle}>
          RSI(MES SEP23 ({cfg.interval}),7,3)
        </ChartTitle>
        <ChartTitle $left={5} $top={copyright}>
          © 2023 NinjaTrader, LLC
        </ChartTitle>
      </Pane>
      <Pane $h={cfg.time.h}>
        <TimeAxis cfg={cfg} />
      </Pane>
      <ScrollBar $h={cfg.scrollH}>
        <ScrollArrow $w={18} $start />
        <ScrollThumb $w={cfg.thumb} $gap={cfg.thumbGap} />
        <ScrollArrow $w={cfg.rightBtn} />
      </ScrollBar>
    </Frame>
  );
}

/* ---------- order panel ---------- */
function Order() {
  return (
    <OrderPanel>
      <ActionGrid>
        {["Buy Mkt", "Sell Mkt", "Buy Ask", "Sell Ask", "Buy Bid", "Sell Bid", "Rev", "Close"].map((label) => (
          <ActionButton key={label}>{label}</ActionButton>
        ))}
      </ActionGrid>
      <PositionBox>
        <PositionCell>Flat</PositionCell>
        <PositionCell $split>Entry</PositionCell>
        <PnlCell>$937.50</PnlCell>
      </PositionBox>
      <FieldGrid>
        <Field>
          <FieldLabel>Instrument</FieldLabel>
          <FieldBox $disabled>
            &nbsp;MES SEP23
            <Chevron />
          </FieldBox>
        </Field>
        <Field>
          <FieldLabel>TIF</FieldLabel>
          <FieldBox>
            GTC
            <Chevron />
          </FieldBox>
        </Field>
        <Field>
          <FieldLabel>Account</FieldLabel>
          <FieldBox>
            APEX-2973...
            <Chevron />
          </FieldBox>
        </Field>
        <Field>
          <FieldLabel>Order qty</FieldLabel>
          <FieldBox>
            <QtyValue>2</QtyValue>
            <QtyIcons viewBox="0 0 60 28">
              <rect x="3" y="3" width="22" height="2" />
              <rect x="3" y="8" width="22" height="3" />
              {[12, 16, 20, 24].map((y) =>
                [3, 9, 15, 21].map((x) => <rect key={`${x}-${y}`} x={x} y={y} width="4" height="3" />)
              )}
              <polygon points="44,3 51,10 37,10" />
              <polygon points="44,25 51,18 37,18" />
            </QtyIcons>
          </FieldBox>
        </Field>
        <Field $wide>
          <FieldLabel>ATM Strategy</FieldLabel>
          <FieldBox $shaded>
            <InfoGlyph>i</InfoGlyph>2
            <Chevron />
          </FieldBox>
        </Field>
      </FieldGrid>
      <QuoteGrid>
        <span>A:</span>
        <span>4492.25</span>
        <span>68</span>
        <span>B:</span>
        <span>4492.00</span>
        <span>101</span>
      </QuoteGrid>
    </OrderPanel>
  );
}

/* ---------- page ---------- */
function LeftWindow() {
  const cfg = LEFT_CFG;
  const dashed = [
    { color: "#00BFFF", points: [[83, 642], [300, 630], [480, 605], [540, 580], [700, 560]].map(([x, y]) => [osc4x(x), osc4y(y)]) },
    {
      color: "#87CEFA",
      points: [[700, 560], [820, 548], [1000, 530], [1270, 512]].map(([x, y]) => [osc4x(x), osc4y(y)]),
    },
    {
      color: "#FF8C00",
      points: [[1270, 512], [1400, 516], [1480, 520], [1560, 532]].map(([x, y]) => [osc4x(x), osc4y(y)]).concat(
        [[0, 534], [90, 550], [146, 550]].map(([x, y]) => [osc5x(x), osc4y(y)])
      ),
    },
    {
      color: "#87CEFA",
      points: [[146, 550], [250, 515], [310, 470], [380, 430], [460, 370], [520, 310], [600, 230], [680, 160], [765, 120]].map(([x, y]) => [osc5x(x), osc4y(y)]),
    },
  ];
  return (
    <Window $width={1836} $topEdge={3} $edged>
      <TopBar cfg={cfg} h={44} buttonsMr={5} />
      <SubBar $h={14} />
      <Body>
        <ChartFrame
          cfg={cfg}
          titleLines={[
            "EMA(MES SEP23 (15 Minute),60), EMA(MES SEP23 (15 Minute),200), SupDemZones(MES SEP23 (15 Minute),0.3,0.5,5,Renko,0.05,0.1,#FF1E90FF,false,false,true,1.2 | Dec.",
            "2016,1,#FFFFD700,false)",
          ]}
          titlePos={[5, 7]}
          fTop={4}
          oscTitle={5}
          rsiTitle={5}
          copyright={255}
          infoTop={16}
          main={<PriceChart cfg={cfg} data={LEFT_MAIN} bars={LEFT_BARS} getX={lx} getY={ly} markX={lx11} width={20} />}
          osc={
            <OscChart
              cfg={cfg}
              values={LEFT_OSC}
              getX={lx}
              getY={osc4y}
              isPurple={(i) => i >= 24 && i <= 31}
              barWidth={21}
              lines={dashed}
              ups={[[osc4x(83), osc4y(653)], [osc5x(146), osc4y(575)]]}
              downs={[[osc4x(1295), osc4y(500)]]}
            />
          }
          rsi={
            <RsiChart
              cfg={cfg}
              white={LEFT_RSI_W}
              gold={LEFT_RSI_G}
              getX={lx}
              getY={osc4y}
              labels={
                <>
                  <RsiFlag x1={1711} x2={1825} y1={1435} y2={1454} fill="#FFC800" />
                  <AxisText x={1726} y={1443} $fill="#000">52.71</AxisText>
                  <RsiFlag x1={1711} x2={1825} y1={1407} y2={1435} fill="#fff" />
                  <AxisText x={1726} y={1422} $fill="#000">57.73</AxisText>
                </>
              }
            />
          }
        />
      </Body>
      <TabRow $ml={53}>
        <Tab $w={185}>MES SEP23</Tab>
        <AddTab>+</AddTab>
      </TabRow>
    </Window>
  );
}

function RightWindow() {
  const cfg = RIGHT_CFG;
  const dashed = [
    { color: "#FF8C00", points: [[78, 503], [200, 540], [300, 580], [400, 605], [500, 620], [620, 622]].map(([x, y]) => [osc8x(x), osc8y(y)]) },
    { color: "#00BFFF", points: [[560, 622], [700, 612], [800, 595], [920, 575], [1050, 548], [1130, 515]].map(([x, y]) => [osc8x(x), osc8y(y)]) },
    {
      color: "#87CEFA",
      points: [[1130, 515], [1200, 450], [1280, 390], [1400, 330], [1568, 230]].map(([x, y]) => [osc8x(x), osc8y(y)]).concat(
        [[100, 240], [190, 165], [280, 140], [400, 120], [520, 78], [590, 74]].map(([x, y]) => [osc9x(x), osc8y(y)])
      ),
    },
    { color: "#FF8C00", points: [[590, 74], [690, 92], [780, 130], [860, 170], [920, 218]].map(([x, y]) => [osc9x(x), osc8y(y)]) },
  ];
  return (
    <Window $width={1967} $topEdge={1}>
      <TopBar cfg={cfg} h={45} buttonsMr={-3} />
      <SubBar $h={13} />
      <Body>
        <ChartFrame
          cfg={cfg}
          titleLines={[
            "EMA(MES SEP23 (7 BetterRenko),60), EMA(MES SEP23 (7 BetterRenko),200), SupDemZones(MES SEP23 (7",
            "BetterRenko),0.3,0.5,5,Renko,0.05,0.1,#FF1E90FF,false,false,true,1.2 | Dec. 2016,1,#FFFFD700,false)",
          ]}
          titlePos={[5, 6]}
          fTop={4}
          oscTitle={6}
          rsiTitle={6.5}
          copyright={256}
          infoTop={17}
          main={<PriceChart cfg={cfg} data={RIGHT_MAIN} bars={RIGHT_BARS} getX={rx} getY={ry} markX={(v) => v} width={11} />}
          osc={
            <OscChart
              cfg={cfg}
              values={RIGHT_OSC}
              getX={rx}
              getY={osc8y}
              isPurple={(i) => RIGHT_PURPLE.has(i)}
              barWidth={11.5}
              lines={dashed}
              ups={[[osc8x(572), osc8y(635)], [osc8x(660), osc8y(630)], [osc8x(719), osc8y(622)], [osc8x(924), osc8y(582)], [osc9x(329), osc8y(487)]]}
              downs={[[osc8x(632), osc8y(463)], [osc8x(690), osc8y(463)], [osc8x(895), osc8y(463)], [osc9x(295), osc8y(125)], [osc9x(559), osc8y(58)]]}
            />
          }
          rsi={
            <RsiChart
              cfg={cfg}
              white={RIGHT_RSI_W}
              gold={RIGHT_RSI_G}
              getX={rx}
              getY={osc8y}
              labels={
                <>
                  <RsiFlag x1={3347} x2={3460} y1={1449} y2={1477} fill="#FFC800" />
                  <RsiFlag x1={3347} x2={3460} y1={1442} y2={1471} fill="#fff" />
                  <AxisText x={3362} y={1457} $fill="#000">42.09</AxisText>
                </>
              }
            />
          }
        />
        <Order />
      </Body>
      <TabRow $ml={53}>
        <Tab $w={186}>MES SEP23</Tab>
        <AddTab>+</AddTab>
      </TabRow>
    </Window>
  );
}

export default function App() {
  return (
    <>
      <GlobalStyle />
      <Page>
        <LeftWindow />
        <Gutter />
        <RightWindow />
      </Page>
    </>
  );
}
